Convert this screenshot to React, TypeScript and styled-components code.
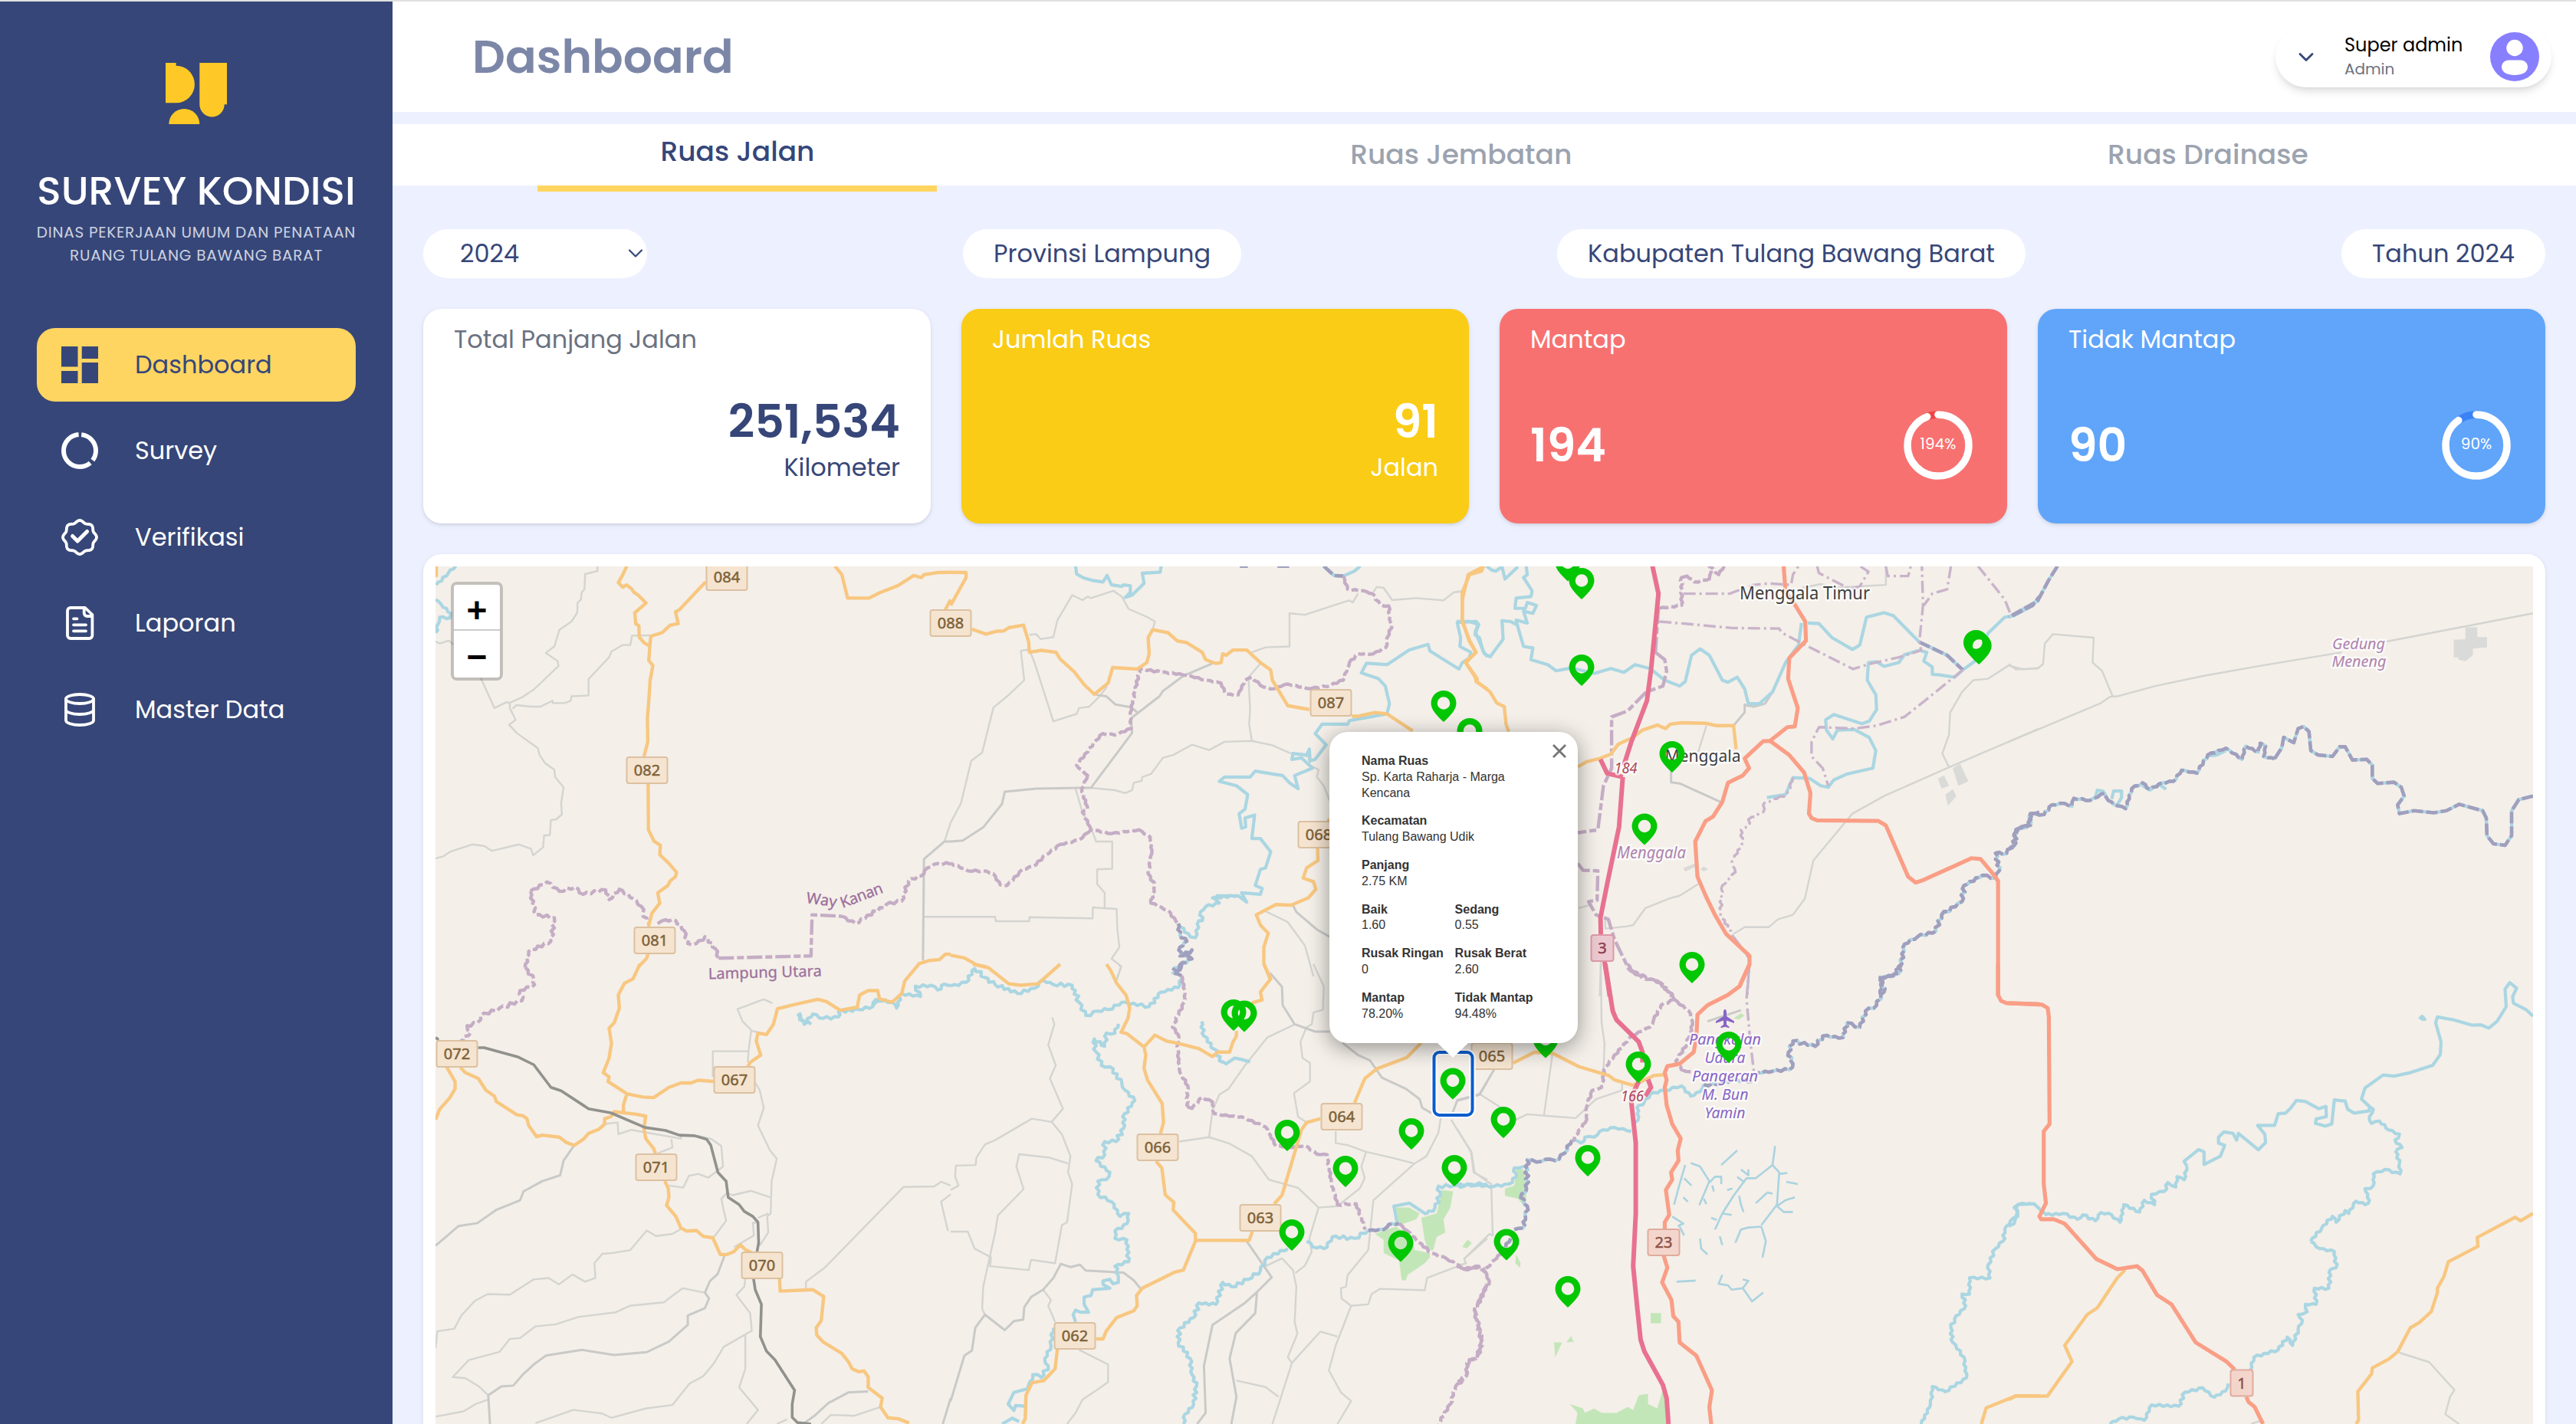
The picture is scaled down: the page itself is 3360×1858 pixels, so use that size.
import React from 'react';
import styled, { createGlobalStyle } from 'styled-components';

const navy = '#364678';
const sans = "'Poppins', 'Inter', 'Open Sans', sans-serif";

const GlobalStyle = createGlobalStyle`
  * { box-sizing: border-box; }
  body { margin: 0; background: #edf1ff; font-family: ${sans}; }
`;

/* ---------- shell ---------- */

const Page = styled.div`
  display: flex;
  width: 3360px;
  height: 1858px;
  overflow: hidden;
  border-top: 2px solid #e0e0e0;
  background: #edf1ff;
`;

const Sidebar = styled.aside`
  display: flex;
  flex-direction: column;
  align-items: center;
  flex: none;
  width: 512px;
  padding: 80px 48px 0;
  background: ${navy};
  color: #fff;
`;

const Brand = styled.h1`
  margin: 51px 0 3px;
  font-size: 52px;
  font-weight: 500;
  line-height: 72px;
  white-space: nowrap;
`;

const Agency = styled.p`
  margin: 0;
  color: #cdd2e0;
  font-size: 20px;
  line-height: 30px;
  letter-spacing: 0.037em;
  text-align: center;
  white-space: nowrap;
`;

const Nav = styled.nav`
  display: flex;
  flex-direction: column;
  gap: 16.4px;
  width: 416px;
  margin-top: 80px;
`;

const NavItem = styled.a<{ $active?: boolean }>`
  display: flex;
  align-items: center;
  gap: 48px;
  height: 96px;
  padding-left: 32px;
  border-radius: 24px;
  background: ${(p) => (p.$active ? '#ffd561' : 'transparent')};
  color: ${(p) => (p.$active ? navy : '#fff')};
  font-size: 32px;
`;

const Main = styled.main`
  display: flex;
  flex-direction: column;
  flex: 1;
  min-width: 0;
`;

const Header = styled.header`
  display: flex;
  align-items: center;
  justify-content: space-between;
  flex: none;
  height: 144px;
  padding: 0 32px 0 104px;
  background: #fff;
`;

const PageTitle = styled.h2`
  margin: 0;
  color: #7c87a8;
  font-size: 60px;
  font-weight: 600;
  line-height: 80px;
`;

const UserMenu = styled.button`
  display: flex;
  align-items: center;
  width: 360px;
  height: 80px;
  padding: 0 16px 0 28px;
  border: 0;
  border-radius: 40px;
  background: #fff;
  box-shadow: 0 8px 12px -2px rgba(0, 0, 0, 0.1), 0 4px 8px -4px rgba(0, 0, 0, 0.1);
  font-family: inherit;
  text-align: left;
`;

const UserText = styled.span`
  display: flex;
  flex: 1;
  flex-direction: column;
  margin-left: 38px;
  white-space: nowrap;
`;

const UserName = styled.span`
  color: #000;
  font-size: 24px;
  line-height: 32px;
`;

const UserRole = styled.span`
  color: #6b7280;
  font-size: 20px;
  line-height: 30px;
`;

const Tabs = styled.div`
  display: flex;
  justify-content: space-around;
  flex: none;
  height: 80px;
  margin-top: 16px;
  background: #fff;
`;

const Tab = styled.button<{ $active?: boolean }>`
  display: flex;
  align-items: center;
  height: ${(p) => (p.$active ? 88 : 80)}px;
  padding: 0 160px ${(p) => (p.$active ? 9 : 1)}px;
  border: 0;
  border-bottom: ${(p) => (p.$active ? '8px solid #ffd561' : '0')};
  background: none;
  color: ${(p) => (p.$active ? navy : '#9ca3af')};
  font-family: inherit;
  font-size: 36px;
  font-weight: 500;
  white-space: nowrap;
`;

const Content = styled.section`
  display: flex;
  flex: 1;
  flex-direction: column;
  gap: 40px;
  min-height: 0;
  padding: 57px 40px 0;
`;

/* ---------- filters ---------- */

const Filters = styled.div`
  display: flex;
  justify-content: space-between;
`;

const Pill = styled.div`
  display: flex;
  align-items: center;
  height: 64px;
  padding: 0 40px;
  border-radius: 32px;
  background: #fff;
  color: ${navy};
  font-size: 32px;
  white-space: nowrap;
`;

const YearSelect = styled(Pill)`
  justify-content: space-between;
  width: 292px;
  padding: 0 5px 0 48px;
`;

/* ---------- stat cards ---------- */

const Stats = styled.div`
  display: grid;
  flex: none;
  grid-template-columns: repeat(4, 1fr);
  gap: 40px;
  height: 280px;
`;

const StatCard = styled.article<{ $bg: string; $fg: string }>`
  display: flex;
  flex-direction: column;
  padding: 16px 40px 0;
  border-radius: 24px;
  background: ${(p) => p.$bg};
  box-shadow: 0 2px 6px rgba(0, 0, 0, 0.1), 0 2px 4px -2px rgba(0, 0, 0, 0.1);
  color: ${(p) => p.$fg};
`;

const StatTitle = styled.h3<{ $color?: string }>`
  margin: 0;
  color: ${(p) => p.$color ?? 'inherit'};
  font-size: 32px;
  font-weight: 400;
  line-height: 48px;
`;

const StatTotal = styled.div`
  display: flex;
  flex-direction: column;
  align-items: flex-end;
  margin-top: 47px;
`;

const StatValue = styled.strong`
  font-size: 60px;
  font-weight: 600;
  line-height: 72px;
`;

const StatUnit = styled.span`
  font-size: 32px;
  line-height: 48px;
`;

const StatRow = styled.div`
  display: flex;
  align-items: center;
  justify-content: space-between;
  height: 100px;
  margin-top: 64px;
`;

const Gauge = styled.div`
  display: grid;
  place-items: center;
  width: 100px;
  height: 100px;
  > * { grid-area: 1 / 1; }
`;

const GaugeText = styled.span`
  margin-top: -4px;
  font-size: 20px;
`;

/* ---------- map ---------- */

const MapCard = styled.div`
  flex: 1;
  min-height: 0;
  padding: 16px 16px 0;
  border-radius: 24px 24px 0 0;
  background: #fff;
  box-shadow: 0 2px 6px rgba(0, 0, 0, 0.1);
`;

const MapCanvas = styled.div`
  position: relative;
  height: 100%;
  overflow: hidden;
  background: #f4efe9;
`;

const MapSvg = styled.svg`
  display: block;
  width: 2736px;
  height: 1119px;
`;

const ZoomControl = styled.div`
  position: absolute;
  top: 20px;
  left: 20px;
  display: flex;
  flex-direction: column;
  width: 68px;
  border: 4px solid rgba(0, 0, 0, 0.2);
  border-radius: 8px;
  background-clip: padding-box;
`;

const ZoomButton = styled.button<{ $first?: boolean }>`
  height: ${(p) => (p.$first ? 60 : 61)}px;
  padding: ${(p) => (p.$first ? 8 : 6)}px 0 0;
  border: 0;
  border-bottom: ${(p) => (p.$first ? '2px solid #ccc' : '0')};
  border-radius: ${(p) => (p.$first ? '4px 4px 0 0' : '0 0 4px 4px')};
  background: #fff;
  color: #000;
  font: bold 46px/50px 'Liberation Sans', Arial, sans-serif;
`;

const Popup = styled.div`
  position: absolute;
  top: 216px;
  left: 1166px;
  width: 324px;
  height: 406px;
  padding: 28px 0 0 42px;
  border-radius: 24px;
  background: #fff;
  box-shadow: 0 6px 28px rgba(0, 0, 0, 0.4);
  color: #333;
  font: 16px/20.8px 'Liberation Sans', Arial, sans-serif;
`;

const PopupTip = styled.div`
  position: absolute;
  top: 100%;
  left: 141px;
  width: 40px;
  height: 19px;
  background: #fff;
  clip-path: polygon(0 0, 100% 0, 50% 100%);
`;

const PopupClose = styled.svg`
  position: absolute;
  top: 15px;
  right: 14px;
  width: 20px;
  height: 20px;
`;

const Facts = styled.dl`
  display: grid;
  grid-template-columns: 121.6px 130px;
  row-gap: 16px;
  margin: 0;
`;

const Fact = styled.div<{ $wide?: boolean }>`
  grid-column: ${(p) => (p.$wide ? '1 / -1' : 'auto')};
  width: ${(p) => (p.$wide ? '205px' : 'auto')};
  white-space: ${(p) => (p.$wide ? 'normal' : 'nowrap')};
`;

const FactName = styled.dt`
  font-weight: 700;
`;

const FactValue = styled.dd`
  margin: 0;
`;

/* ---------- map data ---------- */

type Kind = 'road' | 'lane' | 'street' | 'river' | 'creek' | 'border' | 'bound' | 'bank' | 'rail' | 'toll' | 'trunk' | 'wood' | 'built';
type Layer = [Kind, number, string];

const kindStyle: Record<Kind, React.SVGProps<SVGGElement>> = {
  built: { fill: '#dadad8' },
  wood: { fill: '#c3e6b8' },
  lane: { stroke: '#d4d4d1', strokeWidth: 2.4 },
  street: { stroke: '#c9cac8', strokeWidth: 3 },
  creek: { stroke: '#aad3df', strokeWidth: 2.6 },
  river: { stroke: '#aad6e2', strokeWidth: 4.2 },
  bank: { stroke: '#a09fbe', strokeWidth: 4.6, strokeDasharray: '15 4' },
  border: { stroke: '#c5adc5', strokeWidth: 4.4, strokeDasharray: '20 4 9 4' },
  bound: { stroke: '#c9b4ca', strokeWidth: 3.4, strokeDasharray: '16 5 3 5' },
  road: { stroke: '#f8c780', strokeWidth: 4.4 },
  trunk: { stroke: '#fa9e86', strokeWidth: 5.2 },
  rail: { stroke: '#91918d', strokeWidth: 3.6 },
  toll: { stroke: '#e8718f', strokeWidth: 6 },
};

const order: Kind[] = ['built', 'wood', 'lane', 'street', 'creek', 'river', 'bank', 'border', 'bound', 'road', 'rail', 'trunk', 'toll'];

/* Adds small meanders to a polyline so that rivers and borders look irregular. */
function trace(points: string, amp: number): string {
  const pts = points.trim().split(/\s+/).map((p) => p.split(',').map(Number));
  if (!amp) return 'M' + pts.map((p) => p.join(' ')).join('L');
  let out = `M${pts[0].join(' ')}`;
  let n = 1;
  for (let i = 1; i < pts.length; i++) {
    const [ax, ay] = pts[i - 1];
    const [bx, by] = pts[i];
    const len = Math.hypot(bx - ax, by - ay);
    const steps = Math.max(1, Math.round(len / 11));
    for (let s = 1; s < steps; s++) {
      n += 1;
      const r = Math.sin(n * 12.9898) * 43758.5453;
      const k = (0.35 + 0.65 * (r - Math.floor(r))) * amp * (n % 2 ? 1 : -1);
      const t = s / steps;
      out += `L${(ax + (bx - ax) * t - ((by - ay) / len) * k).toFixed(1)} ${(ay + (by - ay) * t + ((bx - ax) / len) * k).toFixed(1)}`;
    }
    out += `L${bx} ${by}`;
  }
  return out;
}

interface Tile { x: number; y: number; w: number; layers: Layer[] }

/* Every tile holds its features on a 1568-unit grid. */
const tiles: Tile[] = [
  { x: 540, y: 700, w: 700, layers: [
    ['road', 0, '622,101 607,137 597,157 610,173 621,165 637,180 642,190 655,200 678,227 645,260 648,298 657,304 658,343 672,362 689,374 686,423 698,440 690,490 686,560 682,620 683,700 672,750; 852,155 775,250 764,257 772,297 748,303 725,328 692,340 689,374; 684,843 685,1000 702,1040 720,1053 718,1085 745,1115 767,1145 764,1160 748,1175 742,1190 712,1215 718,1250 695,1285 685,1330; 684,1422 680,1438 657,1466; 1230,101 1250,130 1267,210 1330,210 1360,192 1415,167 1460,133 1483,140 1490,130 1530,123 1568,122; 1568,215 1552,250; 1568,1425 1553,1424 1535,1443 1505,1446 1472,1458; 65,101 65,138'],
    ['lane', 0, '536,101 536,118 500,128 498,180 490,190 488,215 478,225 477,260 460,290 425,318 410,375 385,397 420,425 422,442 350,522 318,547 280,567; 280,567 270,565 235,585 195,482; 63,358 75,365 102,355 115,368; 690,337 637,338 632,370 610,370 577,392 570,412 510,486 510,542 460,545 458,560 440,568 405,568 405,560 370,580 340,580 300,575 288,587; 280,567 280,585 297,625 278,642 300,670 362,722 367,745 383,773 410,795 412,820 437,855 430,910 432,948 415,965 400,967 397,1018 380,1020 377,1060 348,1087 342,1065 307,1050 228,1072 205,1055 170,1050 105,1075 87,1090 63,1098; 1487,1297 1568,1297; 1568,975 1550,1040'],
    ['street', 0, '1568,1040 1550,1040 1490,1100 1487,1445'],
    ['border', 5, '340,1210 388,1178 425,1210 470,1195 495,1220 560,1205 570,1238 600,1203 640,1235 665,1262 668,1285 688,1320; 712,1320 735,1307 765,1310 790,1345 800,1388 825,1388 850,1365 880,1405 890,1438; 1250,1295 1290,1320 1380,1255 1425,1243 1445,1175 1490,1150 1500,1130 1530,1115 1568,1118; 340,1210 355,1290 410,1300 400,1380 335,1415 325,1470'],
    ['border', 0, '890,1438 1160,1430 1163,1290 1250,1295'],
    ['river', 4, '122,101 100,125 65,165; 63,215 80,232 107,262 105,278 75,275 70,300 63,328'],
  ] },
  { x: 540, y: 1258, w: 700, layers: [
    ['road', 0, '660,0 640,50 615,65 597,105 600,150 585,200 570,218 577,270 570,320 553,370 570,385 567,400 622,442 668,453 700,455 745,420 780,405 810,405 830,396 875,400; 622,442 612,480 612,505; 95,350 120,400 120,425 105,455 75,495 63,530; 135,352 150,370 188,390 210,430 235,450 240,468 300,513 318,517 330,527 335,550 358,588 375,583 425,590 445,608 468,618 495,597 510,577 540,563 557,545 557,527 575,520 585,503 650,512 677,518 672,560 677,595 700,628 706,648; 733,740 743,765 745,795 738,823 765,860 780,900 797,910 825,908 845,928 873,933 895,990 915,990 935,980 953,957 970,975 990,985; 1068,1072 1070,1115 1165,1110 1197,1133 1190,1215 1175,1240 1177,1265 1195,1288 1250,1327 1270,1357 1280,1380 1300,1390 1315,1387 1327,1407 1327,1443 1368,1480 1363,1510 1385,1547 1415,1550 1447,1565; 975,350 982,335 1013,310 1000,262 1005,235 1030,240 1050,205 1062,152 1110,138 1180,120 1205,128 1245,157 1295,147 1302,105 1327,90 1355,90 1360,118 1397,130 1425,100 1434,57 1475,0'],
    ['lane', 0, '1047,133 1022,120 945,153 960,195 988,228 1005,232; 985,228 978,290 975,335; 975,297 873,297 873,385; 998,405 1010,430 1022,490 1005,550 1040,635 1060,663 1045,740 1042,850 1032,860 1035,915 1010,960; 557,545 595,540 597,580 635,565 780,595 780,585 830,585 870,597 898,620 903,690 860,728 830,715 803,722 787,762 745,755; 752,597 755,625 712,645; 915,780 930,788 985,773 1040,795; 1035,850 1005,865; 915,780 898,800 905,840 912,875 880,925 873,933; 1000,882 990,882 993,925 935,965; 780,903 755,920 707,927 680,908 632,975 580,985 550,988 527,1020 530,1070 500,1083 463,1058 423,1092 393,1070 350,1075 280,1127 215,1125 178,1148 137,1200 118,1243 68,1252 63,1310; 850,1120 785,1105 730,1153 630,1165 590,1187 480,1203 415,1228 355,1235 310,1275 280,1278 250,1322 160,1350 113,1408 150,1412 190,1440 217,1470; 217,1485 180,1500 145,1525 63,1543; 968,1072 965,1100 942,1128 982,1190 987,1250 905,1305 875,1363 845,1405 805,1430 755,1503 677,1515 577,1547 550,1532 465,1520 355,1565; 968,1265 968,1380 950,1443 1005,1520 972,1568; 1145,1110 1145,1083 1200,1035 1430,760 1520,758 1540,742 1568,755; 1568,785 1540,810 1560,910; 1363,1510 1285,1540 1218,1537 1190,1568; 1060,1568 1090,1552'],
    ['street', 0, '468,618 437,670 427,720 375,740 320,775 310,805 240,838 185,883 130,893 105,918 63,960; 907,995 887,1057 865,1080 850,1120 862,1140 850,1173 800,1198 800,1230 745,1287 680,1323 585,1333 490,1315 385,1335 350,1365 320,1397 290,1437 255,1440 217,1470 222,1568; 1327,1457 1270,1460 1210,1497 1170,1540 1140,1565; 1568,1480 1545,1568'],
    ['rail', 0, '187,285 205,285 305,317 350,343 400,420 430,432 510,493 575,507 675,557 735,567 775,583 820,585 855,597 867,617 888,710 912,740 918,795 950,820 965,843 990,860 1005,880 1007,950 1002,982; 992,1072 997,1110 1015,1160 1012,1270 1030,1320 1055,1350 1112,1453 1105,1500 1105,1545 1120,1563 1160,1568; 63,250 72,258'],
    ['border', 6, '325,12 350,50 352,70 310,90 315,125 250,150 195,175 185,200 155,210 165,235 135,262'],
    ['river', 5, '1120,170 1140,205 1165,170 1195,185 1240,180 1240,163 1300,155 1340,145 1350,120 1397,130 1410,150 1425,100 1480,110 1465,75 1510,72 1530,88 1550,68 1568,72; 1125,165 1130,185 1160,205; 1340,145 1355,125 1380,120'],
  ] },
  { x: 1240, y: 700, w: 700, layers: [
    ['road', 0, '0,122 45,123 45,140 0,235; 62,316 103,333 135,323 155,322 170,311 213,302 228,360 230,395 265,388 308,395 320,418 360,460 390,505 420,538 460,500 473,447 545,452 573,430 580,400 577,345 590,318 635,328 662,356 690,362 735,395 745,420 775,433 790,430 795,400 805,405 825,387 865,387 905,430 935,455 940,490 985,577 1048,590; 1172,613 1190,613 1240,600 1275,605 1350,663; 1560,101 1512,130 1495,215 1495,285 1515,357 1535,395 1503,428 1533,480 1535,495 1568,520; 1107,962 1103,972; 1072,1062 1073,1105 1040,1130 1030,1165 1060,1177 1067,1203 1045,1232 995,1257 950,1255 893,1290 905,1325 928,1353 915,1400 915,1455 933,1508; 0,1428 40,1437 75,1460 105,1468'],
    ['lane', 0, '230,335 250,333 263,350 300,343 312,285 355,200 385,217 400,205 410,210 475,185 500,205 520,247 575,275 597,290 590,318; 0,975 30,910 60,765 92,737 125,583 165,545 215,490 205,390 228,385; 233,395 245,430 300,630 368,605 375,585 405,580 435,545 457,512; 410,857 480,865 510,875 530,865 535,840 558,833 560,820 585,810 620,755 650,745 705,710 755,728 800,700 880,697 940,712 990,738 1045,750 1050,780 1075,795 1070,820 1090,850 1107,900; 880,697 872,640 875,590 870,480 905,433; 880,395 920,378 990,375 990,262 1035,267 1145,225 1165,218 1175,225 1190,195; 1235,190 1245,172 1265,175 1290,217 1360,210 1440,218 1470,190 1495,187; 365,860 385,940 412,1000 425,1040 472,1040 472,1133 428,1135 428,1185 450,1215 450,1267; 0,1297 130,1297 132,1312 230,1312 230,1298 415,1302 415,1265 485,1270 487,1340 493,1400 470,1440 498,1465 485,1510; 920,1278 985,1315 1035,1395 1060,1500; 933,1490 950,1510'],
    ['street', 0, '425,540 455,545 482,573 527,582 548,603; 0,1040 35,1037 95,992 150,912 158,870 250,860 375,857 410,857 530,670 527,620 610,545 620,527 680,475 765,433; 1000,1257 1010,1280 1070,1340 1107,1365'],
    ['border', 3, '1147,135 1160,180 1215,188 1232,195 1255,232 1280,237 1282,280 1290,300 1275,345 1272,378 1235,400 1190,400 1165,430 1147,490 1100,512 1040,518 985,503 935,520 905,508 880,480 860,490 840,540 805,538 790,500 745,490 690,473; 690,473 552,452 525,600 527,655 480,677 445,672 425,695 368,780 400,815 383,860 400,930 385,940 410,1000 470,1013 550,1000 583,1025 588,1070 577,1150 597,1190 585,1250 635,1275 665,1320; 410,1000 375,1035 320,1050 280,1085 240,1125 210,1135 165,1190 145,1188 125,1150 95,1140 50,1140 0,1113'],
    ['bank', 0, '1090,101 1120,133 1147,135; 845,101 868,101; 955,101 990,101'],
    ['bank', 5, '665,1320 670,1360 690,1380 670,1400 670,1430 705,1410 680,1430 705,1440 670,1460 650,1480'],
    ['river', 0, '365,101 368,128 390,142 415,150 445,155 457,133 470,165 500,170 505,165 525,168 525,190 510,208 530,200 565,160 560,125 612,122 615,101; 1197,101 1180,118 1147,135; 1568,410 1555,390 1545,345 1532,335 1543,300 1535,290 1480,293 1490,345 1488,375 1520,395 1515,415 1495,430 1485,452 1400,390 1395,368 1340,387 1275,437 1215,432 1200,465 1250,485 1270,510 1282,570 1275,605 1165,628 1160,640 1085,640 1065,672 1097,710 1065,760 1050,765 1048,725 1040,745 1000,740 997,760 1025,755 1057,790 1005,815 1015,860 990,840 970,815 930,808 890,800 875,820 800,820 785,835 835,850 868,880 860,930 843,945 850,995 862,990 860,960 888,950 880,1030 905,1030 935,1075 920,1130 905,1135 890,1190 910,1200 905,1220 850,1215 865,1247 840,1225 775,1225'],
    ['river', 4, '840,1225 765,1232 785,1250 745,1262 730,1280 735,1310 725,1310 715,1368 700,1365 665,1320'],
  ] },
  { x: 1240, y: 1258, w: 700, layers: [
    ['wood', 0, '1300,830 1340,830 1370,850 1360,870 1310,890; 1240,920 1300,895 1350,930 1355,975 1400,985 1400,1000 1385,1020 1335,1060 1330,1078 1318,1078 1310,1010 1265,985 1265,940; 1375,865 1420,850 1435,770 1468,775 1460,830 1440,870 1445,915 1420,930 1410,975 1395,975 1385,940; 1497,960 1510,940 1522,952 1508,968'],
    ['road', 0, '65,0 110,12 170,67 205,72 255,67 320,0; 455,0 467,20 485,65 513,107 523,150 518,185 498,232 515,237 565,282 570,310 565,355 575,395 618,475 622,540 613,577; 600,672 617,695 627,787 652,812 650,838 715,918 715,945 680,1043 655,1050 560,1105 543,1130 545,1165 535,1182 485,1205 455,1250 445,1278 425,1278; 565,282 597,242 630,262 665,270 725,288 765,315 780,300 815,300 825,265 835,245 835,228; 880,132 910,122 905,95 935,50 915,0; 312,1312 305,1380 272,1420 238,1427 220,1470 218,1550 210,1568; 715,941 872,942 882,910; 945,818 968,788 1025,565 1040,540 1080,527; 1180,473 1210,390 1245,357 1333,318 1375,268'],
    ['river', 6, '0,75 45,62 70,15 100,45 130,70 195,100 245,82 270,55 300,70 355,72 375,130 395,175 430,160 460,155 500,130 580,145 615,95 665,80 675,40; 490,203 480,235 455,235 450,280 420,255 425,300 440,345 465,350 500,405 510,430 538,465 508,510 505,560 483,605 450,605 450,650 425,670 465,710 455,735 430,740 430,785 470,810 495,860 520,850 515,885 480,910 480,935 515,940 520,1015 480,1030 490,1060; 300,1240 293,1300 275,1345 285,1370 265,1410 240,1400 230,1425; 1040,945 1070,968 1100,965 1115,930 1180,935 1220,908; 985,970 925,1000 905,1045 870,1075 820,1100 795,1085 775,1160 725,1155 710,1205 670,1240 665,1290 700,1345 705,1400 718,1440 710,1500 680,1545 680,1568; 1568,750 1520,750 1500,757 1470,755 1425,757 1430,790 1415,830 1390,853; 733,195 740,245 770,290 795,335'],
    ['river', 0, '490,1060 490,1085 475,1090 465,1075 445,1080 445,1092 465,1105 415,1110 410,1130 390,1135 390,1160 403,1187 380,1187 365,1180 358,1195 365,1220; 230,1425 225,1448 185,1460 168,1500 185,1522 190,1505 215,1507; 150,1568 180,1548 200,1560; 790,330 805,340 830,320 850,325 875,333; 1390,853 1340,815 1295,825 1305,885'],
    ['bank', 3, '675,0 670,20 650,30 675,40; 1220,908 1265,905 1280,888 1310,885'],
    ['border', 3, '675,40 685,100 682,130 648,215 665,240 663,290 670,370 693,415 690,480 705,492 735,453 765,470 770,510 860,525 920,555 950,620 1000,625 1035,618 1070,648 1100,650 1112,745 1130,820 1185,818 1212,905; 1310,885 1335,910 1360,940 1405,985 1450,1005 1500,1040 1545,1030 1568,1060; 1568,1090 1530,1180 1550,1290 1535,1345 1515,1350 1505,1410 1475,1440 1460,1500 1425,1568'],
    ['lane', 0, '490,0 498,10 485,55; 297,182 303,205 285,275 307,345 290,390 328,493 295,538 237,527 130,600 100,615 75,660 73,685 15,687 13,725 23,755 0,770; 295,538 325,580 350,655 343,710 355,750 340,880 325,890 305,1020 235,1008 228,1043 115,1030 118,1000 70,970 50,912 0,912; 343,680 290,660 200,648 192,690 213,767 138,857 130,915 95,1100 92,1175 100,1195; 270,1110 293,1145 285,1165 305,1220; 375,1315 460,1365 460,1425 430,1450 385,1485 365,1530 340,1568; 920,1030 968,1003 1000,1043 1010,1100 1005,1220 1013,1260 985,1340 997,1360 940,1568; 997,1360 1080,1253 1130,1270; 835,1420 920,1442 958,1475; 668,605 755,590 765,500 785,445 812,425 860,345 925,250 1003,207; 755,590 815,612 880,655 930,735 1015,763 1075,830 1130,825 1195,765 1210,730 1200,690 1213,643; 1075,830 1048,935 1055,980 1035,1028 1007,1053; 1125,570 1125,610 1160,617 1213,640 1290,660 1355,680 1390,655 1425,575 1432,525; 1355,680 1235,805 1220,975 1160,1060 1155,1100 1140,1105 1142,1140 1170,1165 1220,1160 1230,1125 1255,1107 1385,1112 1392,1070 1500,1022; 1500,1005 1568,935; 1170,1165 1125,1300 1105,1385 1140,1460 1170,1490 1130,1568; 1060,0 1090,75 1088,155 1060,165 1055,205 1040,215 1022,265 1028,320 1050,337 1050,400 1003,440 1015,520 1040,540; 1462,530 1520,640 1528,710 1568,735'],
    ['street', 0, '0,1490 40,1335 62,1318 72,1240 100,1195 158,1248 185,1217 212,1212 215,1170 235,1135 270,1110 300,1070 322,1022 350,1033 378,1025 395,1045 505,1052 535,1078 555,1107; 865,945 938,1068 895,1118 890,1190 833,1258 815,1345 835,1475 820,1568; 895,1118 860,1155 765,1230 740,1370 745,1530 720,1568; 933,30 968,77 970,140 1005,205 1065,230 1107,230; 1145,268 1190,310 1225,328 1260,387 1330,425 1370,460 1378,490 1405,508; 1462,520 1480,465 1545,445 1568,400'],
  ] },
  { x: 1900, y: 700, w: 760, layers: [
    ['built', 0, '1335,790 1355,775 1377,835 1350,850; 1295,825 1312,815 1325,850 1305,860; 1315,880 1335,862 1345,885 1322,918; 610,1130 640,1115 645,1125 615,1143; 655,1135 665,1125 677,1135 665,1143'],
    ['road', 0, '72,101 67,118 35,130 15,190 15,290 35,355 52,395 25,430 55,485 55,495 90,530 108,568 128,580 133,640 140,665; 326,785 350,768 385,757 415,742 435,708 475,685 500,660 540,643 562,655 575,640 605,635 670,637 700,645 745,645 752,725'],
    ['toll', 0, '527,101 543,195 535,300 523,455 512,560 470,700 450,780; 447,820 437,990 405,1185 387,1300 388,1358; 387,760 405,808 447,820; 398,1449 412,1568'],
    ['trunk', 0, '880,101 885,190 910,232 938,290 940,355 895,415 892,485 918,585 910,648 890,650 843,697 825,698 775,757 787,790 770,815 730,840 715,905 690,955 670,970 642,1040 648,1160 670,1225 695,1290 725,1355 788,1430 788,1460 762,1530; 843,697 895,745 935,805 952,875 948,945 955,960 970,968 1135,970 1155,985 1215,1160 1235,1180 1255,1172 1385,1097 1410,1100 1440,1145 1457,1175 1457,1568'],
    ['river', 0, '80,101 95,115 105,118 122,103 130,145 165,103; 187,101 190,130 180,140 203,185 200,205 160,210 157,245 185,245 190,225 215,235 205,262 180,255 190,295 160,285 165,310 180,375 205,380 200,420 245,437 268,458 310,448 370,467 415,450 450,463 480,437 520,450 560,490 600,510 615,495 632,405 655,383 680,405 715,490 730,497 755,480 775,520 785,570 815,570 850,530 885,430 920,370 928,295; 160,300 145,290 122,287 125,350 90,410 75,400 50,325 58,300 35,290 0,290; 945,295 975,297 1010,345 1065,385 1085,370 1103,275 1150,260 1175,270 1245,360 1320,405 1362,455 1400,420 1430,330 1475,275 1500,270 1550,235 1568,205; 1362,455 1340,480 1300,472 1280,470 1280,445 1257,425 1265,395 1245,388 1205,403 1190,430 1150,443 1130,427 1108,430 1105,490 1128,540 1130,590 1110,630 1090,638 1015,607 993,625 995,660 1012,690 1025,660 1070,658 1110,685 1128,730 1120,790 1050,810 1015,830 1000,855 980,850 950,825 905,822 885,880 835,890'],
    ['bank', 0, '1245,360 1320,405 1362,455; 1495,270 1550,235 1568,205'],
    ['bank', 5, '1568,940 1545,945 1540,985 1505,1000 1500,1050 1480,1080 1450,1080 1460,1140 1450,1165 1415,1155 1365,1190 1360,1245 1305,1290 1290,1345 1240,1365 1205,1390 1190,1490 1145,1505 1140,1560'],
    ['river', 2, '1540,985 1505,1000 1500,1050; 1415,1155 1365,1190 1360,1245 1305,1290'],
    ['border', 3, '720,101 705,130 680,101 685,120 680,145 640,155 620,135 605,140 605,235 545,245'],
    ['border', 0, '535,395 560,420 565,460 555,510 510,530 460,595 417,615 417,790 395,850 380,1000 326,1010; 326,1115 340,1138 380,1140 378,1240 355,1245 375,1290 408,1305 425,1375 465,1480; 535,395 543,240'],
    ['border', 3, '465,1480 510,1510 540,1515 585,1568'],
    ['bound', 0, '545,290 620,298 740,312 868,314 875,328 930,365 1067,452 1110,435 1190,412 1250,388 1245,360 1255,235 1252,101; 610,195 735,195 755,185 800,165 840,160 900,165 905,130 920,101; 970,101 975,125 1060,180 1085,170 1108,120 1085,101; 1155,101 1160,135 1215,135 1222,101; 1330,101 1320,180 1280,195 1257,235; 1403,101 1475,215 1492,270; 1362,455 1260,560 1205,615 1130,645 1070,655 975,650 955,700 955,750 985,790 1000,850'],
    ['bound', 4, '905,822 890,880 830,905 825,940 785,965 785,990 765,1000 768,1050 740,1110 750,1145 715,1190 710,1290 745,1365'],
    ['bound', 0, '745,1365 788,1440 782,1568'],
    ['lane', 0, '0,188 15,188; 672,645 650,735; 650,1185 600,1225 575,1233 508,1267 475,1325 455,1330 400,1337 400,1300; 388,1449 385,1568; 328,1267 355,1258; 1568,655 1325,787 1150,885 1065,945 960,1105 937,1235 905,1290 865,1305 840,1332 775,1332 745,1355; 1325,787 1307,740 1325,675 1328,600 1360,530 1390,490 1430,485 1485,440 1525,453 1568,448; 930,175 980,162 1010,175 1155,165 1155,101'],
    ['street', 0, '775,570 775,600 745,645; 830,570 800,580 775,575; 850,530 830,570; 577,800 577,838 600,842 710,905'],
  ] },
  { x: 1900, y: 1258, w: 760, layers: [
    ['wood', 0, '160,700 180,700 188,770 185,830 165,800 130,790 130,765 155,755; 15,965 30,940 40,950 28,968; 262,1290 284,1290 265,1340; 295,1290 308,1268 315,1288; 522,1190 550,1190 550,1225 522,1225; 305,1500 340,1515 345,1530 370,1515 390,1530 430,1530 460,1510 475,1520 490,1470 515,1465 515,1500 540,1515 555,1450 562,1460 567,1568 320,1568 325,1530; 160,990 172,1020 170,1035 158,1020; 745,185 765,168 775,175 760,188'],
    ['bank', 5, '1197,0 1175,40 1140,45 1150,95 1130,140 1100,160 1085,215 1050,200 1040,250 985,245 965,280 905,262 893,300 905,340 895,360 850,365 810,370; 795,400 740,395 700,410 665,410; 310,600 290,645 265,670 240,665 215,675 190,668 188,765 172,795 190,825 185,860 178,900 155,905; 145,935 132,965'],
    ['river', 4, '665,410 655,435 630,450 605,415 560,430 520,445 505,470 485,490 490,520 480,540; 470,570 425,557 385,570 370,590 345,590 335,610 310,600; 0,750 50,755 100,758 140,750 160,725 155,695 180,690; 1545,815 1510,820 1505,835 1510,860 1490,875 1475,905 1470,945 1450,970 1430,1025 1435,1070 1380,1070 1380,1125 1360,1125 1370,1165 1340,1210 1330,1240 1335,1290 1365,1340 1372,1410 1315,1458 1280,1440 1275,1500 1250,1568'],
    ['border', 3, '125,980 100,1010 75,1045 88,1080 50,1180 70,1290 55,1345 30,1350 25,1405 0,1425; 0,1030 30,1042 65,1030 75,1050; 460,0 475,25 520,50 550,65 585,120 550,140 530,190 520,215 470,245 400,350 390,420 365,430 350,485 350,530 310,605; 585,120 625,160 635,205 620,270 590,330 605,360 630,367'],
    ['bound', 0, '788,0 780,120 790,260 800,370'],
    ['toll', 0, '400,0 420,160 430,190 490,265 500,300 500,335; 490,400 475,440 470,470 482,610 482,850 475,1030 485,1160 495,1280 505,1320 555,1435 565,1480 570,1568; 515,393 523,420 507,450'],
    ['trunk', 0, '788,0 762,75 730,105 675,140 648,172 645,250 638,300 600,340 567,348 560,370 565,395 560,420 565,480 580,545 603,595 595,635 597,670 577,710 580,735 563,770 572,855 560,880 560,903; 557,994 567,1035 553,1085 578,1145 583,1200 597,1220 600,1290 645,1335 687,1453 680,1510 685,1568; 1457,0 1457,105 1465,125 1480,133 1568,136'],
    ['road', 0, '152,337 210,300 260,305 330,350 410,380 425,395 475,413 530,380 560,377; 1412,1568 1425,1513 1505,1472 1568,1472'],
    ['lane', 0, '388,0 390,200 398,270 395,370; 258,305 235,515; 62,443 120,490 160,530 190,512 320,525 375,460 445,430 445,408; 0,560 40,640 48,710 93,750 97,925 88,920 20,1005 25,1020 10,1025'],
    ['street', 0, '102,357 62,443 0,465; 675,195 765,157'],
    ['creek', 0, '755,635 712,685; 857,620 850,685 805,730 780,730 745,790 715,850 695,905; 850,685 868,710 862,820 820,890; 820,895 785,898 765,905 750,950; 820,895 832,945 823,1000; 630,678 655,690 680,740 653,822; 680,745 695,725 712,725 712,750; 615,685 600,750 585,820; 612,730 632,755; 835,780 805,815; 835,778 850,783; 760,790 765,820 772,845; 715,850 740,855; 862,825 880,845 905,845; 862,825 885,805 910,795; 870,715 890,712; 887,742 918,750; 580,860 610,885 595,893; 600,895 612,925; 655,935 658,970 675,990; 708,928 715,958; 592,1083 643,1079; 610,795 622,810; 665,800 672,818; 728,770 742,765; 688,755 692,775; 685,865 700,872; 715,1060 705,1090 730,1095 740,1110 770,1105 795,1150 825,1120; 770,1075 785,1080 770,1105; 755,725 775,745; 765,700 785,720 785,700'],
  ] },
  { x: 2620, y: 700, w: 740, layers: [
    ['river', 0, '240,890 245,865 265,870; 285,895 290,868 312,868 312,890 300,915; 550,748 575,745 600,730; 370,850 390,865 415,845 435,862'],
    ['bank', 0, '135,101 110,150 80,220 0,275; 735,758 755,720 760,685 788,703 800,655 815,648 830,665 835,730 855,745 895,750 915,717 930,717 950,762 990,760 1005,780 1005,825 1020,842 1065,838 1085,855 1093,885 1075,915 1080,945 1120,935 1175,942 1210,935 1245,913 1310,935 1320,960 1322,1020 1340,1048 1372,1053 1390,1020 1390,935 1410,897 1449,885'],
    ['bank', 3, '0,1068 20,1045 15,1015 35,990 60,985 60,945 98,948 120,915 155,910 175,920 180,893 225,900 265,875 275,900 300,918 323,928 340,860 370,840 390,862 425,840 455,835 478,797 520,807 550,745 600,722 645,760 655,715 690,735 695,705 710,715 705,750 735,758'],
    ['lane', 0, '1449,262 1045,358; 920,395 700,440 540,475 405,510 300,545 280,547 255,568 0,700; 288,547 258,458 232,430 235,345 122,333 100,365 95,435 80,450 20,453 0,435'],
    ['built', 0, '1262,310 1295,310 1295,343 1322,343 1322,378 1297,380 1283,383 1283,405 1262,425 1243,420 1243,412 1230,412 1230,352 1262,350'],
  ] },
  { x: 2620, y: 1258, w: 740, layers: [
    ['trunk', 0, '0,133 92,138 108,150 111,180 113,545 97,570 97,750 103,815 85,860 90,870 125,870 155,885 242,1005 300,1040 355,1030 370,1045 410,1128 450,1160 517,1290 602,1355 625,1383; 657,1475 663,1493 680,1510 703,1568'],
    ['road', 0, '322,1042 300,1070 245,1172 217,1195 155,1300 175,1355 107,1473 20,1472 0,1485; 1449,850 1415,875 1400,863 1295,932 1297,962 1215,1015 1203,1065 1185,1105 1185,1120 1168,1185 1135,1222 1110,1240 1075,1322 1050,1347 1005,1377 1003,1397 965,1457 967,1555 960,1568'],
    ['lane', 0, '1080,1325 1162,1357 1232,1452 1220,1475 1207,1535 1245,1568; 670,1568 700,1555'],
    ['river', 0, '1449,177 1430,155 1395,133 1393,110 1404,82 1385,63 1372,85 1375,145 1350,195 1327,218 1305,207 1280,208 1230,190 1185,180 1180,200 1195,265 1193,308 1172,345 1110,370 1065,382 1035,378 985,422 975,460 997,485 997,500 955,508 937,495 930,467 900,463 893,545 875,552 848,543 850,528 878,520 877,485 857,493 820,468 795,465 780,490 765,508 745,510 735,550 688,550 708,580 710,608 690,633 635,577 630,600 620,577 595,572 580,590 580,610 597,618 585,655 540,683 540,640 525,632 485,672 493,690; 1135,187 1143,178 1150,188 1140,188'],
    ['river', 4, '493,690 485,735 465,725 462,760 440,745 430,775 395,785 403,820 375,805 362,845 318,820 308,880 285,855 255,847 240,875 205,855 190,870 150,850 100,855; 835,945 860,970 900,980 905,1035 890,1040 885,1105 845,1105 850,1160 820,1160 825,1185 800,1195 812,1215 800,1245 785,1300 770,1272 745,1315 678,1340 668,1385; 607,1430 600,1455 568,1477 537,1445 487,1460 470,1507 395,1503 375,1555 345,1545 305,1550 280,1568; 997,485 1008,495 997,520 1003,543 1025,535 1050,565 1080,580 1068,600 1087,625 1070,640 1080,680 1082,715 1040,700 1008,715 1010,745 1000,765 985,765 997,805 985,820 960,808 940,850 930,840 905,880 895,860 865,900 835,945'],
    ['river', 0, '90,840 70,817 25,820 15,830 25,840 15,885 0,893; 90,840 105,855'],
  ] },
];

const shields: [string, number, number, number, string][] = [
  ['084', 948, 753, 55, 'tan'], ['082', 844, 1005, 55, 'tan'], ['081', 854, 1227, 55, 'tan'], ['088', 1240, 813, 55, 'tan'],
  ['087', 1736, 917, 55, 'tan'], ['068', 1720, 1089, 55, 'tan'], ['072', 596, 1375, 55, 'tan'], ['067', 958, 1409, 55, 'tan'],
  ['071', 856, 1523, 55, 'tan'], ['070', 994, 1651, 55, 'tan'], ['066', 1510, 1497, 55, 'tan'], ['064', 1750, 1457, 55, 'tan'],
  ['063', 1644, 1589, 55, 'tan'], ['062', 1402, 1743, 55, 'tan'], ['065', 1946, 1378, 55, 'tan'],
  ['3', 2090, 1237, 31, 'pink'], ['23', 2170, 1621, 43, 'salmon'], ['1', 2924, 1804.5, 31, 'salmon'],
];

const shieldColors: Record<string, [string, string, string]> = {
  tan: ['#f5e4d0', '#dcc1a1', '#7d6138'],
  pink: ['#ecc9d0', '#dc9aa8', '#8d4153'],
  salmon: ['#f4d5cc', '#dfab9e', '#8c5145'],
};

const labels: [string, number, number, number, number, string, boolean][] = [
  ['Menggala Timur', 2354, 782, 170, 23, '#3f3f3f', false],
  ['Menggala', 2221, 994, 99, 22, '#3f3f3f', false],
  ['Menggala', 2154, 1120, 90, 21, '#ae82ae', true],
  ['184', 2120.5, 1008.5, 30, 19, '#ab4657', true],
  ['166', 2129, 1437, 30, 19, '#ab4657', true],
  ['Pangkalan', 2250, 1362.5, 94, 20.5, '#8664c6', true],
  ['Udara', 2250, 1386.6, 53, 20.5, '#8664c6', true],
  ['Pangeran', 2250, 1411, 86, 20.5, '#8664c6', true],
  ['M. Bun', 2250, 1434.8, 61, 20.5, '#8664c6', true],
  ['Yamin', 2250, 1459, 53, 20.5, '#8664c6', true],
  ['Gedung', 3076.5, 846.6, 69, 20.5, '#ae82ae', true],
  ['Meneng', 3077, 870.3, 71, 20.5, '#ae82ae', true],
];

/* Tip position of every location pin. */
const pins: [number, number][] = [
  [2045, 758.5], [2063, 782], [2063, 895], [1883, 942], [1917, 978], [2181, 1008], [2145, 1102.5], [2207, 1283],
  [2577.4, 863], [2581.2, 867], [1609, 1345], [1623, 1346.5], [2016, 1380.5], [2137, 1413], [2255, 1387], [1961, 1485],
  [2071, 1535], [1965, 1644.5], [2045, 1706], [1679, 1502], [1755, 1549], [1841, 1500], [1897, 1548], [1685, 1632],
  [1827, 1646.5], [1895, 1434.5],
];

const facts: [string, string, boolean][] = [
  ['Nama Ruas', 'Sp. Karta Raharja - Marga Kencana', true],
  ['Kecamatan', 'Tulang Bawang Udik', true],
  ['Panjang', '2.75 KM', true],
  ['Baik', '1.60', false],
  ['Sedang', '0.55', false],
  ['Rusak Ringan', '0', false],
  ['Rusak Berat', '2.60', false],
  ['Mantap', '78.20%', false],
  ['Tidak Mantap', '94.48%', false],
];

const pinPath = 'M16.5 0A16.5 16.5 0 0 0 0 16.5C0 25.5 8.5 33.5 16.5 41C24.5 33.5 33 25.5 33 16.5A16.5 16.5 0 0 0 16.5 0ZM16.5 8.2A8.3 8.3 0 1 1 16.5 24.8A8.3 8.3 0 1 1 16.5 8.2Z';

function MapDrawing() {
  return (
    <MapSvg viewBox="568 739 2736 1119">
      {order.map((kind) => (
        <g key={kind} fill="none" strokeLinejoin="round" {...kindStyle[kind]}>
          {tiles.map((tile) =>
            tile.layers
              .filter((l) => l[0] === kind || (kind === 'river' && l[0] === 'bank'))
              .map(([, amp, lines], i) => (
                <g key={`${tile.x}-${tile.y}-${i}`} transform={`translate(${tile.x} ${tile.y}) scale(${tile.w / 1568} ${600 / 1568})`}>
                  <path vectorEffect="non-scaling-stroke" d={lines.split(';').map((s) => trace(s, amp)).join('')} />
                </g>
              )),
          )}
        </g>
      ))}
      {shields.map(([text, x, y, w, tone]) => {
        const [fill, stroke, color] = shieldColors[tone];
        return (
          <g key={text + x} fontFamily="'Noto Sans', sans-serif" fontSize={20} textAnchor="middle">
            <rect x={x - w / 2 + 1} y={y - 17} width={w - 2} height={34} rx={3} fill={fill} stroke={stroke} strokeWidth={2} />
            <text x={x} y={y + 7.2} fill={color} stroke={color} strokeWidth={0.5}>{text}</text>
          </g>
        );
      })}
      <g fontFamily="'Noto Sans', sans-serif" textAnchor="middle" paintOrder="stroke" stroke="rgba(255,255,255,0.7)" strokeWidth={5} strokeLinejoin="round">
        {labels.map(([text, x, y, w, size, color, italic]) => (
          <text key={text + x + y} x={x} y={y} fontSize={size} fill={color} fontStyle={italic ? 'italic' : 'normal'} textLength={w} lengthAdjust="spacingAndGlyphs">{text}</text>
        ))}
      </g>
      <g fontFamily="'Noto Sans', sans-serif" fontSize={20} fill="#9c709c" stroke="#9c709c" strokeWidth={0.3}>
        <text x={1051} y={1178} transform="rotate(8 1051 1178)" textLength={40}>Way</text>
        <text x={1099} y={1185} transform="rotate(-21 1099 1185)" textLength={58}>Kanan</text>
        <text x={924} y={1277.5} transform="rotate(-1.5 924 1277.5)" textLength={148}>Lampung Utara</text>
      </g>
      <path fill="#8664c6" d="M2250 1317c1.3 0 2 2 2 4v5l10 6.500v2.500l-10-3.500v5.500l3.500 2.500v1.800l-5.500-1.500-5.500 1.500v-1.800l3.500-2.500v-5.500l-10 3.500v-2.500l10-6.500v-5c0-2 .7-4 2-4z" />
      <rect x={1870.500} y={1373} width={50} height={82} rx={7} fill="none" stroke="#fff" strokeWidth={8} />
      <rect x={1870.500} y={1373} width={50} height={82} rx={7} fill="none" stroke="#0a5dcc" strokeWidth={4} />
      {pins.map(([x, y], i) => (
        <path key={i} d={pinPath} transform={`translate(${x - 16.5} ${y - 41})`} fill="#04c704" fillRule="evenodd" />
      ))}
    </MapSvg>
  );
}

/* ---------- icons ---------- */

const badge = Array.from({ length: 97 }, (_, i) => {
  const a = (i / 96) * Math.PI * 2;
  const r = 20.6 + 1.4 * Math.cos(8 * a);
  return `${(24 + r * Math.cos(a)).toFixed(2)} ${(24 + r * Math.sin(a)).toFixed(2)}`;
}).join('L');

const line = { width: 48, height: 48, viewBox: '0 0 48 48', fill: 'none', stroke: 'currentColor', strokeWidth: 3.8, strokeLinecap: 'round', strokeLinejoin: 'round' } as const;

const DashboardIcon = () => (
  <svg width={48} height={48} viewBox="0 0 48 48" fill="currentColor">
    <path d="M0 0h21.500v26.500H0zM0 32h21.500v16H0zM26.700 0H48v16H26.700zM26.700 21H48v27H26.700z" />
  </svg>
);
const SurveyIcon = () => (
  <svg width={48} height={48} viewBox="0 0 48 48" fill="none" stroke="currentColor" strokeWidth={6}>
    <circle cx={24} cy={24} r={21} strokeDasharray="43.8 4.6 78.9 4.65" strokeDashoffset={-2.3} transform="rotate(-90 24 24)" />
  </svg>
);
const VerifyIcon = () => (
  <svg {...line}>
    <path d={`M${badge}Z`} />
    <path strokeWidth={5} d="M14.600 22.500l6.500 6.500 12.500-12.500" />
  </svg>
);
const ReportIcon = () => (
  <svg {...line}>
    <path d="M12 4h19l9.400 9v27a4 4 0 0 1-4 4H12a4 4 0 0 1-4-4V8a4 4 0 0 1 4-4z" />
    <path d="M29.700 4.500V11a4 4 0 0 0 4 4H40M16 18.300h4.500M16 26.300h16M16 34.300h16" />
  </svg>
);
const DataIcon = () => (
  <svg {...line}>
    <ellipse cx={24} cy={10} rx={18} ry={6} />
    <path d="M6 10v28c0 3.300 8 6 18 6s18-2.700 18-6V10M6 24c0 3.300 8 6 18 6s18-2.700 18-6" />
  </svg>
);

const Logo = () => (
  <svg width={80} height={80} viewBox="0 0 80 80" fill="#fec926">
    <path d="M0 0h13.600v3.700a24.300 24.300 0 0 1 0 48.600H0z" />
    <path d="M44.300 0H80v54.200h-3.300a16.200 16.200 0 0 1-32.400 0z" />
    <path d="M4.300 80a20 20 0 0 1 40 0z" />
  </svg>
);

const Avatar = () => (
  <svg width={64} height={64} viewBox="0 0 64 64">
    <circle cx={32} cy={32} r={32} fill="#887fff" />
    <circle cx={32} cy={20.500} r={10.700} fill="#fff" />
    <path d="M24 36.500h16c5 0 9 4 9 9 0 7-8 10.500-17 10.500s-17-3.500-17-10.500c0-5 4-9 9-9z" fill="#fff" />
  </svg>
);

function Ring({ value, label, track }: { value: number; label: string; track: string }) {
  const length = 2 * Math.PI * 40;
  return (
    <Gauge>
      <svg width={100} height={100} viewBox="0 0 100 100" fill="none" strokeWidth={9.6}>
        <circle cx={50} cy={50} r={40} stroke={track} />
        <circle cx={50} cy={50} r={40} stroke="#fff" strokeLinecap="round" strokeDasharray={`${length * value} ${length}`} transform="rotate(-90 50 50)" />
      </svg>
      <GaugeText>{label}</GaugeText>
    </Gauge>
  );
}

const navItems = [
  { label: 'Dashboard', icon: DashboardIcon },
  { label: 'Survey', icon: SurveyIcon },
  { label: 'Verifikasi', icon: VerifyIcon },
  { label: 'Laporan', icon: ReportIcon },
  { label: 'Master Data', icon: DataIcon },
];

export default function App() {
  return (
    <Page>
      <GlobalStyle />
      <Sidebar>
        <Logo />
        <Brand>SURVEY KONDISI</Brand>
        <Agency>
          DINAS PEKERJAAN UMUM DAN PENATAAN
          <br />
          RUANG TULANG BAWANG BARAT
        </Agency>
        <Nav>
          {navItems.map(({ label, icon: Icon }, i) => (
            <NavItem key={label} $active={i === 0}>
              <Icon />
              {label}
            </NavItem>
          ))}
        </Nav>
      </Sidebar>
      <Main>
        <Header>
          <PageTitle>Dashboard</PageTitle>
          <UserMenu>
            <svg width={24} height={24} viewBox="0 0 24 24" fill="none" stroke={navy} strokeWidth={2.8} strokeLinecap="round" strokeLinejoin="round">
              <path d="M4 8.500l8 8 8-8" />
            </svg>
            <UserText>
              <UserName>Super admin</UserName>
              <UserRole>Admin</UserRole>
            </UserText>
            <Avatar />
          </UserMenu>
        </Header>
        <Tabs>
          <Tab $active>Ruas Jalan</Tab>
          <Tab>Ruas Jembatan</Tab>
          <Tab>Ruas Drainase</Tab>
        </Tabs>
        <Content>
          <Filters>
            <YearSelect>
              2024
              <svg width={20} height={20} viewBox="0 0 20 20" fill="none" stroke={navy} strokeWidth={2.2} strokeLinecap="round" strokeLinejoin="round">
                <path d="M2 5.500l8 8 8-8" />
              </svg>
            </YearSelect>
            <Pill>Provinsi Lampung</Pill>
            <Pill>Kabupaten Tulang Bawang Barat</Pill>
            <Pill>Tahun 2024</Pill>
          </Filters>
          <Stats>
            <StatCard $bg="#fff" $fg={navy}>
              <StatTitle $color="#6b7280">Total Panjang Jalan</StatTitle>
              <StatTotal>
                <StatValue>251,534</StatValue>
                <StatUnit>Kilometer</StatUnit>
              </StatTotal>
            </StatCard>
            <StatCard $bg="#facc15" $fg="#fff">
              <StatTitle>Jumlah Ruas</StatTitle>
              <StatTotal>
                <StatValue>91</StatValue>
                <StatUnit>Jalan</StatUnit>
              </StatTotal>
            </StatCard>
            <StatCard $bg="#f87171" $fg="#fff">
              <StatTitle>Mantap</StatTitle>
              <StatRow>
                <StatValue>194</StatValue>
                <Ring value={0.94} label="194%" track="#ef4444" />
              </StatRow>
            </StatCard>
            <StatCard $bg="#60a5fa" $fg="#fff">
              <StatTitle>Tidak Mantap</StatTitle>
              <StatRow>
                <StatValue>90</StatValue>
                <Ring value={0.9} label="90%" track="#3b82f6" />
              </StatRow>
            </StatCard>
          </Stats>
          <MapCard>
            <MapCanvas>
              <MapDrawing />
              <ZoomControl>
                <ZoomButton $first>+</ZoomButton>
                <ZoomButton>−</ZoomButton>
              </ZoomControl>
              <Popup>
                <Facts>
                  {facts.map(([name, value, wide]) => (
                    <Fact key={name} $wide={wide}>
                      <FactName>{name}</FactName>
                      <FactValue>{value}</FactValue>
                    </Fact>
                  ))}
                </Facts>
                <PopupClose viewBox="0 0 20 20" fill="none" stroke="#757575" strokeWidth={2.8}>
                  <path d="M2 2l16 16M18 2L2 18" />
                </PopupClose>
                <PopupTip />
              </Popup>
            </MapCanvas>
          </MapCard>
        </Content>
      </Main>
    </Page>
  );
}
